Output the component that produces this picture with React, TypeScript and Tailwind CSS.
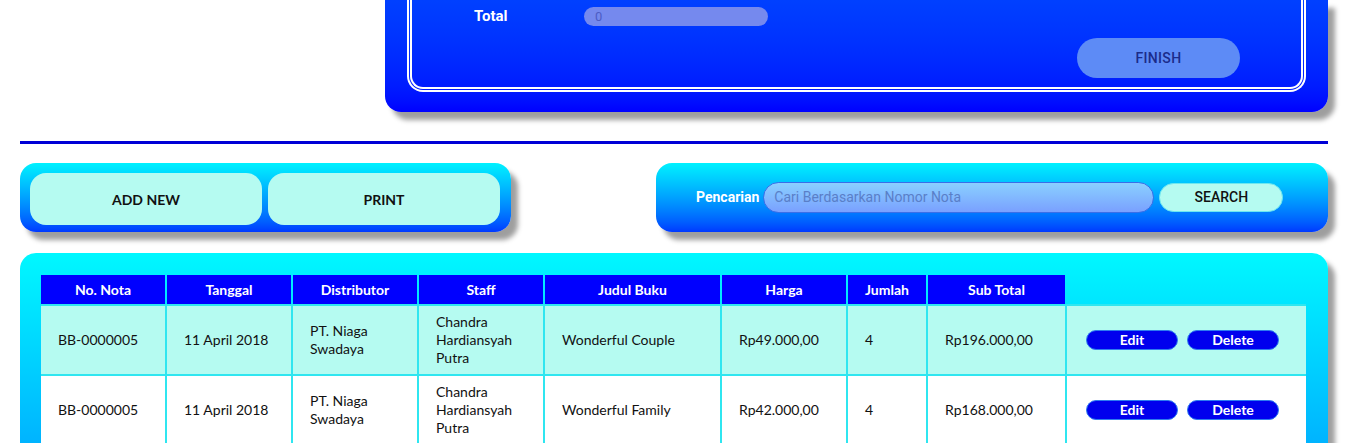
import React from "react";

const rows = [
  { nota: "BB-0000005", tgl: "11 April 2018", dist: "PT. Niaga Swadaya", staff: "Chandra Hardiansyah Putra", judul: "Wonderful Couple", harga: "Rp49.000,00", jml: "4", sub: "Rp196.000,00", bg: "bg-[#b5fbf1]" },
  { nota: "BB-0000005", tgl: "11 April 2018", dist: "PT. Niaga Swadaya", staff: "Chandra Hardiansyah Putra", judul: "Wonderful Family", harga: "Rp42.000,00", jml: "4", sub: "Rp168.000,00", bg: "bg-white" },
];

const headers = ["No. Nota", "Tanggal", "Distributor", "Staff", "Judul Buku", "Harga", "Jumlah", "Sub Total"];

const cols = "grid grid-cols-[124px_124px_124px_124px_175px_124px_78px_137px_239px] gap-x-[2px]";

export default function App() {
  return (
    <div className="w-full min-h-[443px] bg-white font-['Lato',sans-serif] text-[14px] text-[#111]">
      <div className="ml-[20px] w-[1308px]">
        {/* Top panel */}
        <div className="ml-auto w-[943px] h-[112px] rounded-b-[16px] bg-linear-to-b from-[#0040ff] to-[#0000ff] shadow-[7px_8px_5px_rgba(0,0,0,0.38)] px-[22px]">
          <div className="h-[92px] border-[5px] border-t-0 border-double border-white rounded-b-[16px] flex flex-col pt-[7px]">
            <div className="flex items-center h-[19px]">
              <span className="ml-[62px] w-[110px] font-['Roboto',sans-serif] font-bold text-[15px] text-white">Total</span>
              <div className="w-[184px] h-[19px] rounded-full bg-[#7589ee] flex items-center pl-[11px] font-['Roboto',sans-serif] text-[13px] text-[#4d5cc4]">0</div>
            </div>
            <div className="flex justify-end mt-[12px] pr-[61px]">
              <button className="w-[163px] h-[40px] rounded-full bg-[#5d8bf6] font-['Roboto',sans-serif] font-medium text-[14px] text-[#1b2b8a] tracking-[0.3px]">FINISH</button>
            </div>
          </div>
        </div>

        {/* Line */}
        <div className="mt-[29px] h-[3px] bg-[#0000d6]" />

        {/* Action panels */}
        <div className="mt-[19px] flex justify-between">
          <div className="w-[491px] h-[69px] rounded-[16px] bg-linear-to-b from-[#00f2ff] to-[#0038ff] shadow-[7px_8px_5px_rgba(0,0,0,0.38)] pt-[10px] pl-[10px] flex gap-[6px]">
            <button className="w-[232px] h-[52px] rounded-[16px] bg-[#b5fbf1] font-bold text-[14px] text-[#111]">ADD NEW</button>
            <button className="w-[232px] h-[52px] rounded-[16px] bg-[#b5fbf1] font-bold text-[14px] text-[#111]">PRINT</button>
          </div>
          <div className="w-[672px] h-[69px] rounded-[16px] bg-linear-to-b from-[#00f2ff] to-[#0038ff] shadow-[7px_8px_5px_rgba(0,0,0,0.38)] flex items-center pl-[40px]">
            <span className="font-['Roboto',sans-serif] font-bold text-[14px] text-white mr-[4px]">Pencarian</span>
            <div className="w-[391px] h-[31px] rounded-full border border-[#3a6ee8] bg-linear-to-b from-[#8ad0ff] to-[#7aa0ff] flex items-center pl-[10px] font-['Roboto',sans-serif] text-[14px] text-[#5a7fc8]">
              Cari Berdasarkan Nomor Nota
            </div>
            <button className="ml-[5px] w-[124px] h-[29px] rounded-full bg-[#b5fbf1] border border-[#6ce8f0] font-['Roboto',sans-serif] font-medium text-[14px] text-[#111]">SEARCH</button>
          </div>
        </div>

        {/* Table panel */}
        <div className="mt-[21px] rounded-[16px] bg-linear-to-b from-[#00f8ff] to-[#00a8ff] shadow-[7px_8px_5px_rgba(0,0,0,0.38)] pt-[22px] pl-[21px] pb-[30px]">
          <div className="w-[1265px]">
            <div className={cols}>
              {headers.map((h) => (
                <div key={h} className="h-[29px] bg-[#0000ff] text-white font-bold text-[14px] flex items-center justify-center">{h}</div>
              ))}
              <div className="h-[29px]" />
            </div>
            <div className={`${cols} gap-y-[2px] bg-[#2fe6f0] pt-[2px]`}>
              {rows.map((r, i) => (
                <React.Fragment key={i}>
                  {[r.nota, r.tgl, r.dist, r.staff, r.judul, r.harga, r.jml, r.sub].map((c, j) => (
                    <div key={j} className={`h-[68px] ${r.bg} flex items-center pl-[17px] pr-[6px] leading-[18px] text-[14px]`}>{c}</div>
                  ))}
                  <div className={`h-[68px] ${r.bg} flex items-center pl-[19px] gap-[9px]`}>
                    <button className="w-[92px] h-[20px] rounded-full bg-[#0000ee] border border-[#2d7cf0] text-white font-bold text-[14px] leading-none">Edit</button>
                    <button className="w-[92px] h-[20px] rounded-full bg-[#0000ee] border border-[#2d7cf0] text-white font-bold text-[14px] leading-none">Delete</button>
                  </div>
                </React.Fragment>
              ))}
            </div>
          </div>
        </div>
        <div className="h-[40px]" />
      </div>
    </div>
  );
}
